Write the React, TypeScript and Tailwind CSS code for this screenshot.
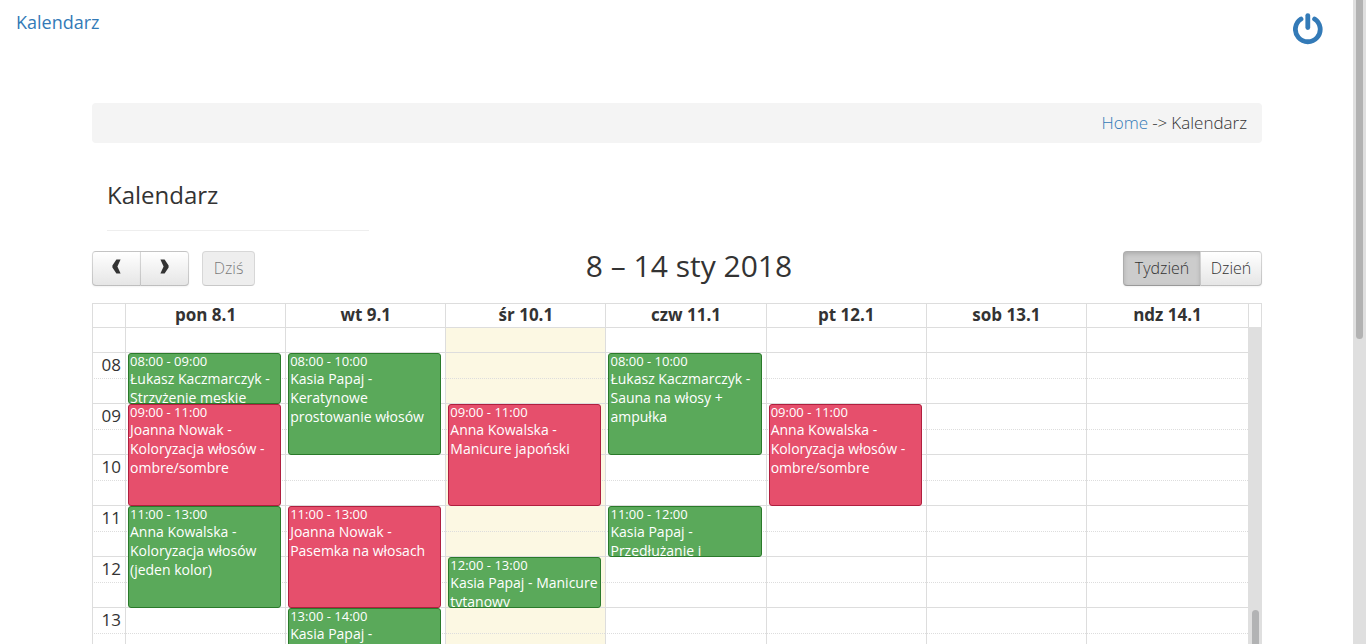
import React from 'react'
import { cva } from 'class-variance-authority'
import clsx from 'clsx'

type EventColor = 'green' | 'red'

interface CalendarEvent {
  day: number
  start: number
  hours: number
  title: string
  color: EventColor
}

const DAYS = ['pon 8.1', 'wt 9.1', 'śr 10.1', 'czw 11.1', 'pt 12.1', 'sob 13.1', 'ndz 14.1']
const TODAY = 2

// Half-hour slots, 7.5 = 07:30
const SLOTS = [7.5, 8, 8.5, 9, 9.5, 10, 10.5, 11, 11.5, 12, 12.5, 13, 13.5, 14, 14.5]

const EVENTS: CalendarEvent[] = [
  { day: 0, start: 8, hours: 1, title: 'Łukasz Kaczmarczyk - Strzyżenie męskie', color: 'green' },
  { day: 0, start: 9, hours: 2, title: 'Joanna Nowak - Koloryzacja włosów - ombre/sombre', color: 'red' },
  { day: 0, start: 11, hours: 2, title: 'Anna Kowalska - Koloryzacja włosów (jeden kolor)', color: 'green' },
  { day: 1, start: 8, hours: 2, title: 'Kasia Papaj - Keratynowe prostowanie włosów', color: 'green' },
  { day: 1, start: 11, hours: 2, title: 'Joanna Nowak - Pasemka na włosach', color: 'red' },
  { day: 1, start: 13, hours: 1, title: 'Kasia Papaj -', color: 'green' },
  { day: 2, start: 9, hours: 2, title: 'Anna Kowalska - Manicure japoński', color: 'red' },
  { day: 2, start: 12, hours: 1, title: 'Kasia Papaj - Manicure tytanowy', color: 'green' },
  { day: 3, start: 8, hours: 2, title: 'Łukasz Kaczmarczyk - Sauna na włosy + ampułka', color: 'green' },
  { day: 3, start: 11, hours: 1, title: 'Kasia Papaj - Przedłużanie i', color: 'green' },
  { day: 4, start: 9, hours: 2, title: 'Anna Kowalska - Koloryzacja włosów - ombre/sombre', color: 'red' },
]

const HOUR_HEIGHT = 51

const pad = (hour: number) => String(hour).padStart(2, '0')

const toolbarButton = cva('h-[35px] border border-black/15 border-b-black/25 pb-0.5 text-base font-light text-[#333]', {
  variants: {
    state: {
      normal: 'bg-linear-to-b from-white to-[#e6e6e6] shadow-[inset_0_1px_0_rgba(255,255,255,0.2),0_1px_2px_rgba(0,0,0,0.05)]',
      active: 'bg-[#ccc] shadow-[inset_0_2px_4px_rgba(0,0,0,0.15),0_1px_2px_rgba(0,0,0,0.05)]',
      disabled: 'bg-[#e6e6e6] opacity-65',
    },
    side: {
      left: 'rounded-l border-r-0',
      right: 'rounded-r',
      both: 'rounded',
    },
  },
})

const PowerIcon = () => (
  <svg width="30" height="32" viewBox="0 0 30 32" fill="none" stroke="currentColor" strokeWidth="4.8" strokeLinecap="round" aria-hidden="true">
    <path d="M8 6A12.4 12.4 0 1 0 21.6 6" />
    <path d="M14.8 2.6V14.6" />
  </svg>
)

const Chevron = ({ flip = false }: { flip?: boolean }) => (
  <svg width="9" height="15" viewBox="0 0 9 15" fill="currentColor" className={clsx('mb-0.5', flip && '-scale-x-100')} aria-hidden="true">
    <path d="M4.4 0.4H8.6L5.4 7.5L8.6 14.6H4.4L0.4 8.6V6.4Z" />
  </svg>
)

const EventBox = ({ event }: { event: CalendarEvent }) => (
  <a
    href="#"
    className={clsx(
      'absolute top-0 left-[2px] right-1 z-10 block overflow-hidden rounded-[3px] border pl-px text-left text-white',
      event.color === 'green' ? 'border-[#2a7a2a] bg-[#5aa95a]' : 'border-[#b01f3f] bg-[#e64f6c]'
    )}
    style={{ height: event.hours * HOUR_HEIGHT }}
  >
    <div className="text-[13px] leading-[15px] whitespace-nowrap">
      {pad(event.start)}:00 - {pad(event.start + event.hours)}:00
    </div>
    <div className="text-sm leading-[19px]">{event.title}</div>
  </a>
)

const WeekTable = () => (
  <table className="w-full table-fixed border-separate border-spacing-0">
    <thead>
      <tr className="h-6">
        <td className="w-[33px] border-t border-l border-[#ddd]" />
        {DAYS.map((day) => (
          <th
            key={day}
            scope="col"
            className="border-t border-l border-[#ddd] px-0 pt-0 pb-0.5 text-center text-[17px] leading-[21px] font-bold nth-last-2:w-[162px]"
          >
            {day}
          </th>
        ))}
        <td className="w-[14px] border-x border-t border-[#ddd]" />
      </tr>
    </thead>
    <tbody>
      {SLOTS.map((slot, row) => {
        const fullHour = Number.isInteger(slot)
        const line = clsx('border-t border-l border-[#ddd] p-0', !fullHour && row > 0 && '[border-top-style:dotted]')
        return (
          <tr key={slot} className={fullHour ? 'h-[26px]' : 'h-[25px]'}>
            <th scope="row" className={clsx(line, 'pr-1 text-right align-top text-[17px] leading-6 font-normal')}>
              {fullHour ? pad(slot) : null}
            </th>
            {DAYS.map((day, index) => {
              const event = EVENTS.find((e) => e.day === index && e.start === slot)
              return (
                <td key={day} className={clsx(line, index === TODAY && 'bg-[#fcf8e3]', event && 'relative')}>
                  {event && <EventBox event={event} />}
                </td>
              )
            })}
            {row === 0 && (
              <td rowSpan={SLOTS.length} className="bg-[#dfdfdf] p-0 align-top">
                <div className="mx-auto mt-[283px] h-24 w-[7px] rounded-full bg-[#b2b3b4]" />
              </td>
            )}
          </tr>
        )
      })}
    </tbody>
  </table>
)

export default function App() {
  return (
    <div className="flex h-screen overflow-hidden bg-white font-['Open_Sans',sans-serif] text-[#333]">
      <div className="min-w-0 flex-1 pl-px">
        <header className="flex h-[103px] items-start justify-between pr-[30px] pl-[15px]">
          <a href="#" className="mt-2 text-lg leading-7 font-medium text-[#337ab7]">
            Kalendarz
          </a>
          <a href="#" aria-label="Wyloguj" className="mt-[13px] text-[#337ab7]">
            <PowerIcon />
          </a>
        </header>

        <main className="mx-auto max-w-[1170px]">
          <nav className="flex h-10 items-center justify-end gap-1 rounded bg-[#f4f4f4] px-[15px] text-[17px] font-light">
            <a href="#" className="text-[#337ab7]">
              Home
            </a>
            <span>-&gt;</span>
            <span>Kalendarz</span>
          </nav>

          <h1 className="ml-[15px] w-[262px] border-b border-[#eee] pt-[35px] pb-[19px] text-2xl leading-[33px] font-medium">Kalendarz</h1>

          <div className="mt-5 mb-[17px] flex items-start justify-between">
            <div className="flex">
              <button type="button" aria-label="Poprzedni" className={clsx(toolbarButton({ state: 'normal', side: 'left' }), 'flex w-12 items-center justify-center')}>
                <Chevron />
              </button>
              <button type="button" aria-label="Następny" className={clsx(toolbarButton({ state: 'normal', side: 'right' }), 'flex w-[49px] items-center justify-center')}>
                <Chevron flip />
              </button>
              <button type="button" disabled className={clsx(toolbarButton({ state: 'disabled', side: 'both' }), 'ml-[13px] w-[53px]')}>
                Dziś
              </button>
            </div>
            <h2 className="text-3xl leading-[30px] font-medium">8 – 14 sty 2018</h2>
            <div className="flex">
              <button type="button" className={clsx(toolbarButton({ state: 'active', side: 'left' }), 'w-[77px]')}>
                Tydzień
              </button>
              <button type="button" className={clsx(toolbarButton({ state: 'normal', side: 'right' }), 'w-[62px]')}>
                Dzień
              </button>
            </div>
          </div>

          <WeekTable />
        </main>
      </div>

      <div className="w-[13px] shrink-0 bg-[#dfdfdf]">
        <div className="mx-auto h-[339px] w-[7px] rounded-b-full bg-[#b2b2b2]" />
      </div>
    </div>
  )
}
